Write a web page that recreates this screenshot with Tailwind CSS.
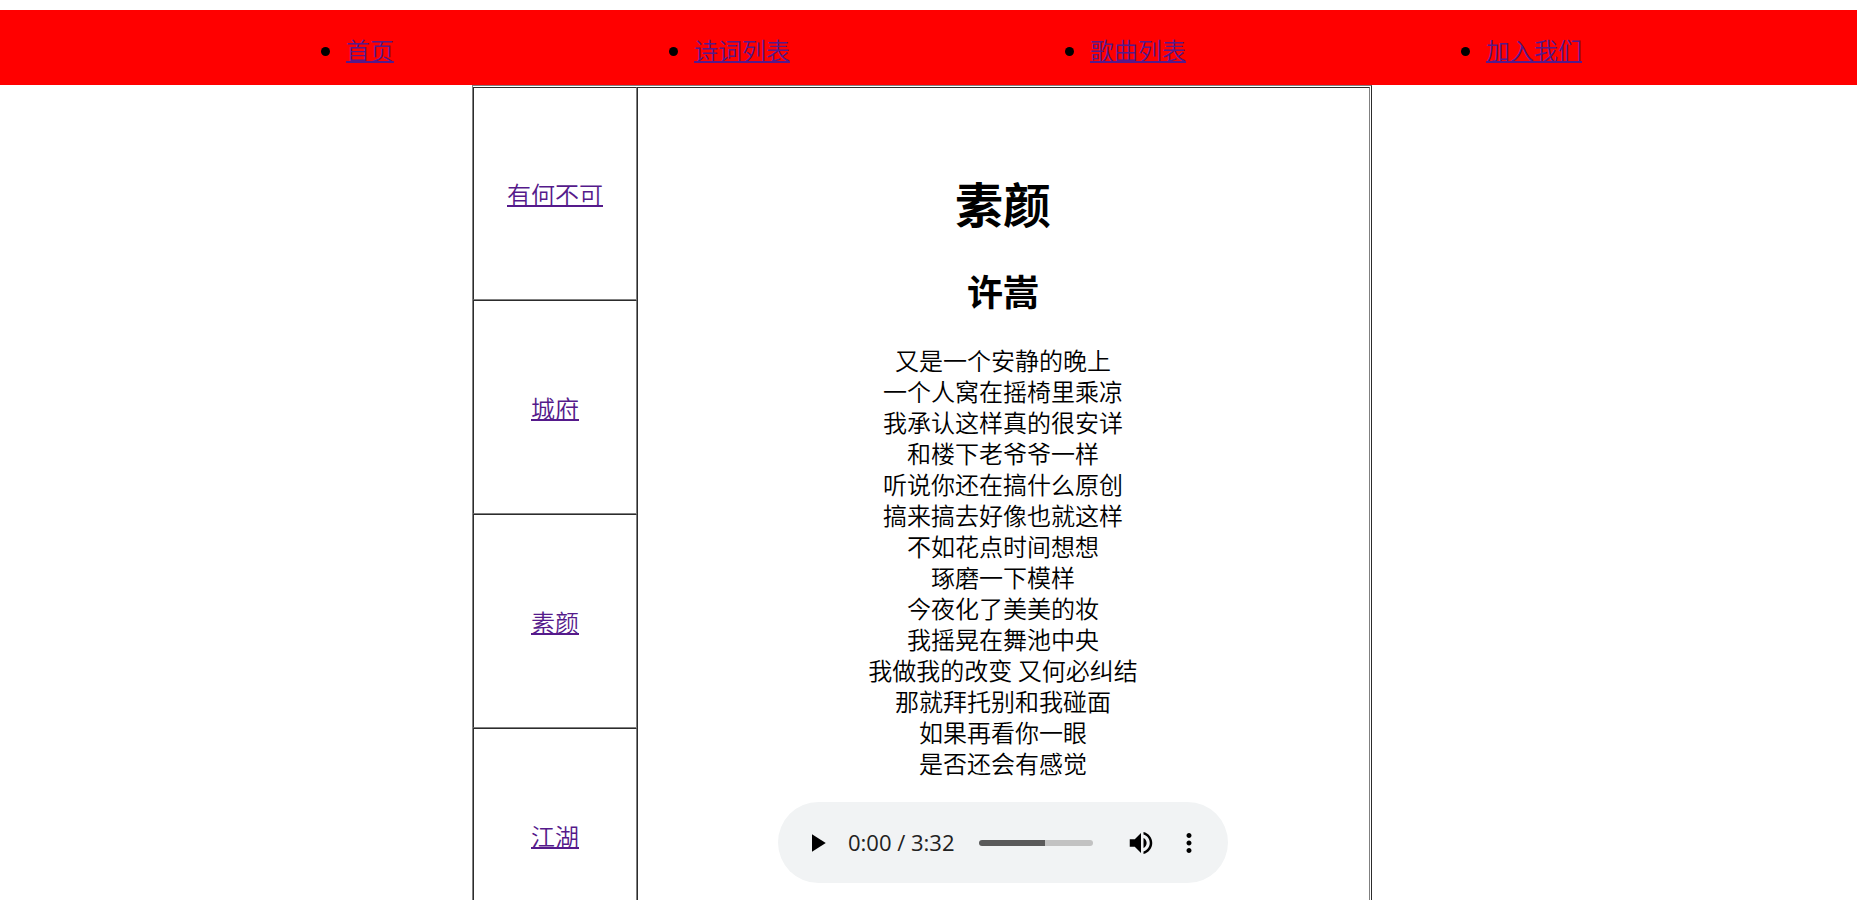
<!DOCTYPE html>
<html lang="zh-CN">
<head>
  <meta charset="UTF-8">
  <meta name="viewport" content="width=device-width, initial-scale=1.0">
  <title>素颜 - 许嵩</title>
  <script src="https://cdn.jsdelivr.net/npm/@tailwindcss/browser@4"></script>
</head>
<body class="bg-white text-black text-2xl leading-[31px] font-[350] font-['Noto_Sans_CJK_SC',sans-serif] [text-decoration-skip-ink:none]">
  <div class="pt-[10px] pr-3">
    <!-- 导航栏 -->
    <nav class="bg-[#ff0000] pt-6 pb-5 pl-[196px] pr-[125px]">
      <ul class="flex justify-around list-disc">
        <li><a href="#" class="text-[#551a8b] underline decoration-2 underline-offset-1">首页</a></li>
        <li><a href="#" class="text-[#551a8b] underline decoration-2 underline-offset-1">诗词列表</a></li>
        <li><a href="#" class="text-[#551a8b] underline decoration-2 underline-offset-1">歌曲列表</a></li>
        <li><a href="#" class="text-[#551a8b] underline decoration-2 underline-offset-1">加入我们</a></li>
      </ul>
    </nav>

    <div class="pr-[13px]">
      <div class="mx-auto flex w-full max-w-[900px] border border-t-[#808080] border-l-[#808080] border-r-[#2c2c2c] border-b-[#2c2c2c] pt-px pr-px">
        <!-- 歌曲列表 -->
        <ul class="w-[164px] shrink-0 text-center">
          <li class="flex h-[213px] items-center justify-center border border-t-[#2c2c2c] border-l-[#2c2c2c] border-r-[#808080] border-b-[#808080]"><a href="#" class="text-[#551a8b] underline decoration-2 underline-offset-1">有何不可</a></li>
          <li class="flex h-[214px] items-center justify-center border border-t-[#2c2c2c] border-l-[#2c2c2c] border-r-[#808080] border-b-[#808080]"><a href="#" class="text-[#551a8b] underline decoration-2 underline-offset-1">城府</a></li>
          <li class="flex h-[214px] items-center justify-center border border-t-[#2c2c2c] border-l-[#2c2c2c] border-r-[#808080] border-b-[#808080]"><a href="#" class="text-[#551a8b] underline decoration-2 underline-offset-1">素颜</a></li>
          <li class="flex h-[214px] items-center justify-center border border-t-[#2c2c2c] border-l-[#2c2c2c] border-r-[#808080] border-b-[#808080]"><a href="#" class="text-[#551a8b] underline decoration-2 underline-offset-1">江湖</a></li>
        </ul>

        <!-- 歌词 -->
        <main class="flex-1 border border-t-[#2c2c2c] border-l-[#2c2c2c] border-r-[#808080] border-b-[#808080] pt-[82px] pr-px text-center">
          <h1 class="text-5xl leading-[64px] font-bold">素颜</h1>
          <h2 class="mt-8 text-4xl leading-[48px] font-bold">许嵩</h2>
          <p class="mt-[30px]">
            又是一个安静的晚上<br>
            一个人窝在摇椅里乘凉<br>
            我承认这样真的很安详<br>
            和楼下老爷爷一样<br>
            听说你还在搞什么原创<br>
            搞来搞去好像也就这样<br>
            不如花点时间想想<br>
            琢磨一下模样<br>
            今夜化了美美的妆<br>
            我摇晃在舞池中央<br>
            我做我的改变 又何必纠结<br>
            那就拜托别和我碰面<br>
            如果再看你一眼<br>
            是否还会有感觉
          </p>

          <!-- 播放器 -->
          <div class="mx-auto mt-6 flex h-[81px] w-full max-w-[450px] items-center rounded-full bg-[#f1f3f4] px-6">
            <button type="button" aria-label="播放" class="size-[30px]">
              <svg viewBox="0 0 24 24" class="size-[30px]"><path d="M8 5v14l11-7z"/></svg>
            </button>
            <span class="ml-4 font-['Open_Sans',sans-serif] font-normal text-[22px] text-[#212121]">0:00 / 3:32</span>
            <input type="range" min="0" max="212" value="0" aria-label="播放进度" class="ml-6 mr-[33px] h-[6px] min-w-0 flex-1 appearance-none rounded-full bg-linear-to-r from-[#5a5a5a] from-58% to-[#c2c2c2] to-58% [&::-webkit-slider-thumb]:appearance-none">
            <button type="button" aria-label="静音" class="size-[30px]">
              <svg viewBox="0 0 24 24" class="size-[30px]"><path d="M3 9v6h4l5 5V4L7 9H3zm13.5 3c0-1.77-1.02-3.29-2.5-4.03v8.05c1.48-.73 2.5-2.25 2.5-4.02zM14 3.23v2.06c2.89.86 5 3.54 5 6.71s-2.11 5.85-5 6.71v2.06c4.01-.91 7-4.49 7-8.77s-2.99-7.86-7-8.77z"/></svg>
            </button>
            <button type="button" aria-label="更多选项" class="ml-[18px] size-[30px]">
              <svg viewBox="0 0 24 24" class="size-[30px]"><path d="M12 8c1.1 0 2-.9 2-2s-.9-2-2-2-2 .9-2 2 .9 2 2 2zm0 2c-1.1 0-2 .9-2 2s.9 2 2 2 2-.9 2-2-.9-2-2-2zm0 6c-1.1 0-2 .9-2 2s.9 2 2 2 2-.9 2-2-.9-2-2-2z"/></svg>
            </button>
          </div>
        </main>
      </div>
    </div>
  </div>
</body>
</html>
